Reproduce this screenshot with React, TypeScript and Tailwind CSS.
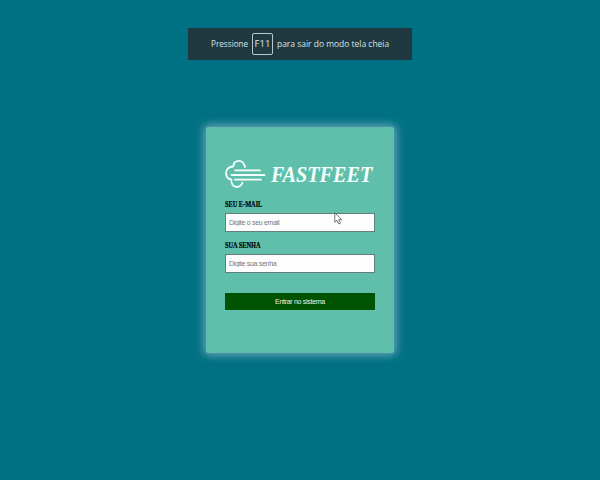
import React from "react";

function Logo() {
  return (
    <div className="flex h-8 items-start">
      <svg width="42" height="32" viewBox="0 0 42 32" className="block shrink-0">
        <g fill="none" stroke="#f4fffc" strokeWidth="1.8" strokeLinecap="round" strokeLinejoin="round">
          <path d="M20 9C19 5 17 2.9 14 2.9C10.8 2.9 8.6 5 8.3 8.5C3.8 8.4 1.1 11.6 1.1 15C1.1 18.6 3.2 21.2 6.4 21.5C5.7 25.7 8.3 29 11.8 29C14.5 29 16.5 27.4 17.4 24.8" />
          <path d="M10 12.4H35M6.5 17H39.5M10 21.7H36" />
        </g>
      </svg>
      <span className="ml-[4px] block origin-left scale-x-[0.84] font-['Liberation_Serif',serif] text-[24px] leading-[33px] font-bold whitespace-nowrap text-[#f4fffc] italic">
        FASTFEET
      </span>
    </div>
  );
}

function Field({ label, placeholder, type }: { label: string; placeholder: string; type: string }) {
  return (
    <label className="block">
      <span className="block h-[15px] origin-left scale-x-[0.82] font-['Liberation_Serif',serif] text-[7.7px] leading-[13px] font-bold whitespace-nowrap text-black [-webkit-text-stroke:0.2px_black]">
        {label}
      </span>
      <input
        type={type}
        placeholder={placeholder}
        className="block h-[19px] w-full border border-[#637f7b] bg-[#fdfdfd] px-[3px] text-[7px] tracking-[-0.3px] text-[#555] placeholder:text-[#777] placeholder:opacity-100"
      />
    </label>
  );
}

export default function App() {
  return (
    <main className="relative flex h-[480px] w-[600px] flex-col items-center overflow-hidden bg-[#007182] pt-[127px] font-['Liberation_Sans',sans-serif]">
      <div className="absolute top-7 left-[188px] flex h-8 w-56 items-center justify-center gap-1 bg-[#203941] font-['Open_Sans',sans-serif] text-[9.5px] leading-[14px] whitespace-nowrap text-[#d7e3e5]">
        <span className="w-[37px] origin-left scale-x-[0.86]">Pressione</span>
        <kbd className="flex h-[22px] w-[21px] items-center justify-center rounded-[2px] border border-[#b8c9cc] font-['Open_Sans',sans-serif]">F11</kbd>
        <span className="w-[112px] origin-left scale-x-[0.89]">para sair do modo tela cheia</span>
      </div>

      <form className="h-[226px] w-[188px] rounded-[2px] bg-[#5fbfab] px-[19px] pt-[31px] shadow-[0_0_8px_2px_#6fa9bb]">
        <Logo />
        <div className="mt-[8px] flex flex-col gap-[7px]">
          <Field label="SEU E-MAIL" placeholder="Digite o seu email" type="email" />
          <Field label="SUA SENHA" placeholder="Digite sua senha" type="password" />
        </div>
        <button type="button" className="mt-5 block h-[17px] w-full bg-[#005300] text-[7px] leading-[17px] tracking-[-0.3px] text-[#edf5ed]">
          Entrar no sistema
        </button>
      </form>

      <svg width="9" height="14" viewBox="0 0 9 14" className="absolute top-[212px] left-[334px]">
        <path d="M.8.8V10.3L3 8.3L4.7 12L6.4 11.2L4.8 7.7H7.8Z" fill="#fff" stroke="#4b5557" strokeWidth=".8" />
      </svg>
    </main>
  );
}
